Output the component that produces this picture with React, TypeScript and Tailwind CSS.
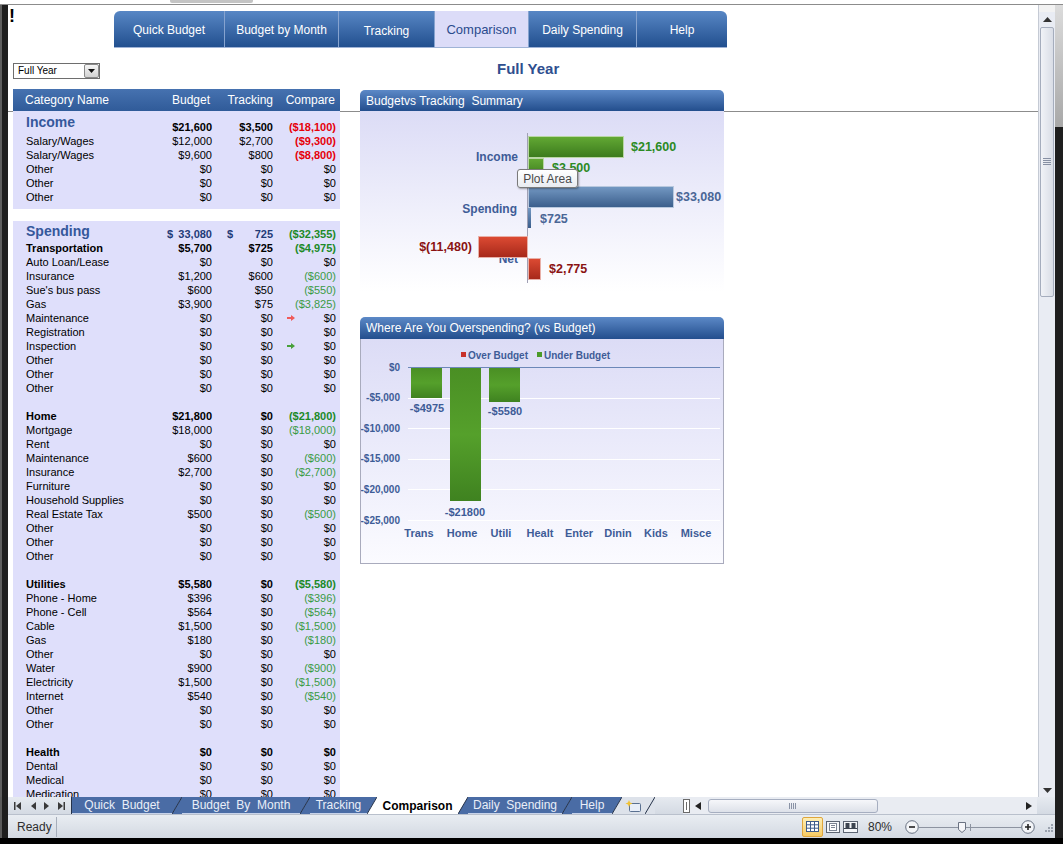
import React from 'react';

type Item = { l: string; b: string; t: string; c: string; bold?: boolean; arrow?: 'r' | 'g'; blank?: boolean };

const FONT = 'Liberation Sans, Arial, sans-serif';

const z = (l: string): Item => ({ l, b: '$0', t: '$0', c: '$0' });
const blank: Item = { l: '', b: '', t: '', c: '', blank: true };

const income: Item[] = [
  { l: 'Salary/Wages', b: '$12,000', t: '$2,700', c: '($9,300)' },
  { l: 'Salary/Wages', b: '$9,600', t: '$800', c: '($8,800)' },
  z('Other'),
  z('Other'),
  z('Other'),
];

const spending: Item[] = [
  { l: 'Transportation', b: '$5,700', t: '$725', c: '($4,975)', bold: true },
  z('Auto Loan/Lease'),
  { l: 'Insurance', b: '$1,200', t: '$600', c: '($600)' },
  { l: "Sue's bus pass", b: '$600', t: '$50', c: '($550)' },
  { l: 'Gas', b: '$3,900', t: '$75', c: '($3,825)' },
  { ...z('Maintenance'), arrow: 'r' },
  z('Registration'),
  { ...z('Inspection'), arrow: 'g' },
  z('Other'),
  z('Other'),
  z('Other'),
  blank,
  { l: 'Home', b: '$21,800', t: '$0', c: '($21,800)', bold: true },
  { l: 'Mortgage', b: '$18,000', t: '$0', c: '($18,000)' },
  z('Rent'),
  { l: 'Maintenance', b: '$600', t: '$0', c: '($600)' },
  { l: 'Insurance', b: '$2,700', t: '$0', c: '($2,700)' },
  z('Furniture'),
  z('Household Supplies'),
  { l: 'Real Estate Tax', b: '$500', t: '$0', c: '($500)' },
  z('Other'),
  z('Other'),
  z('Other'),
  blank,
  { l: 'Utilities', b: '$5,580', t: '$0', c: '($5,580)', bold: true },
  { l: 'Phone - Home', b: '$396', t: '$0', c: '($396)' },
  { l: 'Phone - Cell', b: '$564', t: '$0', c: '($564)' },
  { l: 'Cable', b: '$1,500', t: '$0', c: '($1,500)' },
  { l: 'Gas', b: '$180', t: '$0', c: '($180)' },
  z('Other'),
  { l: 'Water', b: '$900', t: '$0', c: '($900)' },
  { l: 'Electricity', b: '$1,500', t: '$0', c: '($1,500)' },
  { l: 'Internet', b: '$540', t: '$0', c: '($540)' },
  z('Other'),
  z('Other'),
  blank,
  { ...z('Health'), bold: true },
  z('Dental'),
  z('Medical'),
  z('Medication'),
];

function CellArrow({ color }: { color: string }) {
  return (
    <svg width="8" height="6" className="ml-[14px] shrink-0">
      <path d="M0 2h4V0l4 3-4 3V4H0z" fill={color} />
    </svg>
  );
}

function Line({ r, red }: { r: Item; red?: boolean }) {
  if (r.blank) return <div className="h-[14px]" />;
  const neg = r.c.startsWith('(');
  const cColor = red
    ? 'text-[#e6000a] font-bold'
    : neg
      ? r.bold
        ? 'text-[#1c8a28] font-bold'
        : 'text-[#3a9b45]'
      : '';
  return (
    <div className={`grid grid-cols-[139px_60px_61px_63px] h-[14px] leading-[14px] text-[11px] text-black ${r.bold ? 'font-bold' : ''}`}>
      <div className="pl-[13px] whitespace-nowrap">{r.l}</div>
      <div className="text-right">{r.b}</div>
      <div className="text-right">{r.t}</div>
      <div className={`flex items-center ${cColor}`}>
        {r.arrow === 'r' && <CellArrow color="#f05a5a" />}
        {r.arrow === 'g' && <CellArrow color="#47a03a" />}
        <span className="ml-auto">{r.c}</span>
      </div>
    </div>
  );
}

function BudgetTable() {
  return (
    <div className="w-[327px]">
      <div className="flex h-[16px] w-[87px] border border-[#6e6e6e] bg-white">
        <span className="flex-1 pl-[4px] text-[10px] leading-[14px] text-black">Full Year</span>
        <div className="flex h-[14px] w-[15px] items-center justify-center rounded-[2px] border border-[#8a8a8a] bg-linear-to-b from-[#f6f6f6] to-[#d2d2d2]">
          <svg width="7" height="4">
            <path d="M0 0h7L3.5 4z" fill="#111" />
          </svg>
        </div>
      </div>
      <div className="mt-[10px] grid h-[22px] grid-cols-[139px_60px_61px_63px] items-center bg-linear-to-b from-[#4672b0] to-[#305b99] text-[12px] text-white">
        <div className="pl-[12px]">Category Name</div>
        <div className="pr-[2px] text-right">Budget</div>
        <div className="text-right">Tracking</div>
        <div className="pr-[1px] text-right">Compare</div>
      </div>
      <div className="bg-[#dfdffb] pb-[5px]">
        <div className="grid h-[23px] grid-cols-[139px_60px_61px_63px] text-[11px] font-bold">
          <div className="pl-[13px] pt-[3px] text-[14px] leading-[16px] text-[#35589b]">Income</div>
          <div className="self-end text-right leading-[14px]">$21,600</div>
          <div className="self-end text-right leading-[14px]">$3,500</div>
          <div className="self-end text-right leading-[14px] text-[#e6000a]">($18,100)</div>
        </div>
        {income.map((r, i) => (
          <Line key={i} r={r} red={r.c.startsWith('(')} />
        ))}
      </div>
      <div className="h-[12px] bg-white" />
      <div className="bg-[#dfdffb] pb-[20px]">
        <div className="grid h-[20px] grid-cols-[139px_60px_61px_63px] text-[11px] font-bold">
          <div className="pl-[13px] pt-[2px] text-[14px] leading-[16px] text-[#35589b]">Spending</div>
          <div className="flex justify-between self-end pl-[15px] leading-[14px] text-[#1f3b78]">
            <span>$</span>
            <span>33,080</span>
          </div>
          <div className="flex justify-between self-end pl-[15px] leading-[14px] text-[#1f3b78]">
            <span>$</span>
            <span>725</span>
          </div>
          <div className="self-end text-right leading-[14px] text-[#1c8a28]">($32,355)</div>
        </div>
        {spending.map((r, i) => (
          <Line key={i} r={r} />
        ))}
      </div>
    </div>
  );
}

function ChartHeader({ title }: { title: string }) {
  return (
    <div className="flex h-[21px] items-center whitespace-pre rounded-t-[5px] bg-linear-to-b from-[#5c89c7] to-[#234e8d] pl-[6px] text-[12px] text-white">
      {title}
    </div>
  );
}

function SummaryChart() {
  return (
    <div className="relative h-[181px] bg-linear-to-b from-[#dcdcf6] to-white">
      <svg width="364" height="181" className="block">
        <defs>
          <linearGradient id="sg" x1="0" y1="0" x2="0" y2="1">
            <stop offset="0" stopColor="#63a934" />
            <stop offset="1" stopColor="#3b7a1d" />
          </linearGradient>
          <linearGradient id="sb" x1="0" y1="0" x2="0" y2="1">
            <stop offset="0" stopColor="#7499c3" />
            <stop offset="1" stopColor="#3a5d8b" />
          </linearGradient>
          <linearGradient id="sr" x1="0" y1="0" x2="0" y2="1">
            <stop offset="0" stopColor="#dd4b33" />
            <stop offset="1" stopColor="#a6281a" />
          </linearGradient>
        </defs>
        <g fontFamily={FONT} fontWeight="bold" fontSize="12" fill="#3e5c97">
          <text x="158" y="50" textAnchor="end">Income</text>
          <text x="157" y="102" textAnchor="end">Spending</text>
          <text x="158" y="152" textAnchor="end">Net</text>
        </g>
        <line x1="167.5" y1="22" x2="167.5" y2="172" stroke="#a0a0b4" />
        <rect x="168.5" y="25.5" width="95" height="21" fill="url(#sg)" stroke="#b9d6a4" />
        <rect x="168.5" y="47.5" width="15" height="19" fill="url(#sg)" stroke="#b9d6a4" />
        <rect x="168.5" y="75.5" width="145" height="21" fill="url(#sb)" stroke="#b8c8de" />
        <rect x="168" y="97" width="3" height="20" fill="url(#sb)" />
        <rect x="118.5" y="125.5" width="49" height="21" fill="url(#sr)" stroke="#e8b0a8" />
        <rect x="168.5" y="147.5" width="12" height="21" fill="url(#sr)" stroke="#e8b0a8" />
        <g fontFamily={FONT} fontWeight="bold" fontSize="12.5">
          <text x="271" y="40" fill="#2b8a24">$21,600</text>
          <text x="192" y="61" fill="#2b8a24">$3,500</text>
          <text x="316" y="90" fill="#4a6696">$33,080</text>
          <text x="180" y="112" fill="#4a6696">$725</text>
          <text x="112" y="140" textAnchor="end" fill="#8a1212">$(11,480)</text>
          <text x="189" y="162" fill="#8a1212">$2,775</text>
        </g>
      </svg>
      <div className="absolute left-[157px] top-[58px] flex h-[19px] w-[61px] items-center justify-center rounded-[3px] border border-[#7a7a7a] bg-linear-to-b from-white to-[#e9ecf1] text-[12px] text-[#4a4a4a] shadow-[1px_1px_2px_rgba(0,0,0,0.35)]">
        Plot Area
      </div>
    </div>
  );
}

function OverChart() {
  const ys = [28, 58.6, 89.2, 119.8, 150.4, 181];
  const ylabels = ['$0', '-$5,000', '-$10,000', '-$15,000', '-$20,000', '-$25,000'];
  const cats: [string, number][] = [
    ['Trans', 58],
    ['Home', 101],
    ['Utili', 140],
    ['Healt', 179],
    ['Enter', 218],
    ['Dinin', 257],
    ['Kids', 295],
    ['Misce', 335],
  ];
  return (
    <div className="h-[225px] border-x border-b border-[#a9abbd] bg-linear-to-b from-[#dcdcf6] to-[#fbfbff]">
      <svg width="362" height="224" className="block">
        <defs>
          <linearGradient id="og" x1="0" y1="0" x2="0" y2="1">
            <stop offset="0" stopColor="#4a8f24" />
            <stop offset="0.5" stopColor="#55a02b" />
            <stop offset="1" stopColor="#3f8220" />
          </linearGradient>
        </defs>
        <g fontFamily={FONT} fontWeight="bold" fontSize="10" fill="#3e5c97">
          <rect x="100" y="13" width="5" height="5" fill="#c8312a" />
          <text x="107" y="19.5">Over Budget</text>
          <rect x="176" y="13" width="5" height="5" fill="#4b9a28" />
          <text x="183" y="19.5">Under Budget</text>
          {ys.map((y, i) => (
            <React.Fragment key={i}>
              <line x1="47" x2="359" y1={Math.round(y) + 0.5} y2={Math.round(y) + 0.5} stroke={i === 0 ? '#6c88b8' : '#ffffff'} />
              <text x="39" y={y + 3.6} textAnchor="end">
                {ylabels[i]}
              </text>
            </React.Fragment>
          ))}
        </g>
        <rect x="50" y="29" width="31" height="30" fill="url(#og)" />
        <rect x="89" y="29" width="31" height="133" fill="url(#og)" />
        <rect x="128" y="29" width="31" height="34" fill="url(#og)" />
        <g fontFamily={FONT} fontWeight="bold" fontSize="11" fill="#3e5c97" textAnchor="middle">
          <text x="66" y="73">-$4975</text>
          <text x="104" y="177">-$21800</text>
          <text x="144" y="76">-$5580</text>
          {cats.map(([c, x]) => (
            <text key={c} x={x} y="198">
              {c}
            </text>
          ))}
        </g>
      </svg>
    </div>
  );
}

const navTabs = [
  { label: 'Quick Budget', cls: 'w-[110px] rounded-tl-[6px]' },
  { label: 'Budget by Month', cls: 'w-[114px] border-l border-[#86a3cf]' },
  { label: 'Tracking', cls: 'w-[96px] border-l border-[#86a3cf] pt-[3px]' },
  { label: 'Comparison', cls: 'w-[94px] border-l border-[#86a3cf]', active: true },
  { label: 'Daily Spending', cls: 'w-[108px] border-l border-[#86a3cf]' },
  { label: 'Help', cls: 'w-[91px] border-l border-[#86a3cf] rounded-tr-[6px]' },
];

function NavTabs() {
  return (
    <div className="mt-[2px] flex h-[37px] border-b border-[#9fb3d6]">
      {navTabs.map((t) => (
        <div
          key={t.label}
          className={`flex items-center justify-center pt-[1px] ${t.cls} ${
            t.active
              ? 'bg-[#dcdcf8] text-[13px] text-[#2a4b8d]'
              : 'bg-linear-to-b from-[#5887c5] to-[#22508f] text-[12px] text-white'
          }`}
        >
          {t.label}
        </div>
      ))}
    </div>
  );
}

function Slant({ l, r }: { l: string; r: string }) {
  return (
    <svg width="10" height="17" className="block shrink-0">
      <polygon points="0,0 10,0 0,17" fill={l} />
      <polygon points="10,0 10,17 0,17" fill={r} />
      <line x1="0" y1="17" x2="10" y2="0" stroke="#26334a" strokeWidth="1" />
    </svg>
  );
}

const BLUE = '#4a6ca5';
const BAR = '#dde2ea';

function SheetTab({ w, label }: { w: string; label: string }) {
  return (
    <div className={`flex items-center justify-center whitespace-pre border-b border-[#c7d3ea] bg-[#4a6ca5] text-[12px] leading-[14px] text-[#e9eef8] ${w}`}>
      {label}
    </div>
  );
}

function SheetTabs() {
  return (
    <div className="flex h-[17px]">
      <div className="w-[8px] border-l-[2px] border-[#5a5a5a] bg-[#1e1e1e]" />
      <div className="flex flex-1 bg-linear-to-b from-[#e6eaf0] to-[#d4dae3]">
        <div className="flex w-[62px] items-center pl-[6px]">
          <svg width="7" height="8" className="block">
            <rect x="0" y="0" width="1.5" height="8" fill="#3a3a3a" />
            <path d="M7 0v8L2 4z" fill="#3a3a3a" />
          </svg>
          <svg width="6" height="8" className="ml-[9px] block">
            <path d="M6 0v8L1 4z" fill="#3a3a3a" />
          </svg>
          <svg width="6" height="8" className="ml-[8px] block">
            <path d="M0 0v8l5-4z" fill="#3a3a3a" />
          </svg>
          <svg width="7" height="8" className="ml-[8px] block">
            <path d="M0 0v8l5-4z" fill="#3a3a3a" />
            <rect x="5.5" y="0" width="1.5" height="8" fill="#3a3a3a" />
          </svg>
        </div>
        <div className="flex w-[613px] items-stretch">
          <div className="ml-[1px] w-[1px] bg-[#26334a]" />
          <SheetTab w="w-[100px]" label="Quick  Budget" />
          <Slant l={BLUE} r={BLUE} />
          <SheetTab w="w-[118px]" label="Budget  By  Month" />
          <Slant l={BLUE} r={BLUE} />
          <SheetTab w="w-[57px]" label="Tracking" />
          <Slant l={BLUE} r="#ffffff" />
          <div className="flex w-[81px] items-center justify-center bg-white text-[12px] font-bold leading-[14px] text-black">Comparison</div>
          <Slant l="#ffffff" r={BLUE} />
          <SheetTab w="w-[94px]" label="Daily  Spending" />
          <Slant l={BLUE} r={BLUE} />
          <SheetTab w="w-[40px]" label="Help" />
          <Slant l={BLUE} r={BAR} />
          <div className="flex w-[23px] items-center justify-center bg-[#dde2ea]">
            <svg width="17" height="12" className="block">
              <rect x="4.5" y="3.5" width="11" height="8" rx="1" fill="#e8eef8" stroke="#5a7090" />
              <path d="M4 0l1 2.5 2.5 1-2.5 1-1 2.5-1-2.5L0.5 3.5 3 2.5z" fill="#f2c230" />
            </svg>
          </div>
          <Slant l={BAR} r={BAR} />
        </div>
        <div className="flex w-[354px] items-center bg-[#e9ecf2]">
          <div className="flex h-[14px] w-[7px] items-center justify-center border border-[#6a6a6a] bg-white">
            <div className="h-[8px] w-px bg-[#6a6a6a]" />
          </div>
          <svg width="6" height="8" className="ml-[5px] block">
            <path d="M6 0v8L0 4z" fill="#222" />
          </svg>
          <div className="ml-[7px] flex h-[14px] w-[170px] items-center justify-center rounded-[3px] border border-[#a6aec0] bg-linear-to-b from-[#f6f7fa] to-[#dde1e9]">
            <svg width="8" height="6" className="block">
              <path d="M0.5 0v6M2.5 0v6M4.5 0v6M6.5 0v6" stroke="#8a93a6" />
            </svg>
          </div>
          <div className="flex-1" />
          <svg width="6" height="8" className="mr-[5px] block">
            <path d="M0 0v8l6-4z" fill="#222" />
          </svg>
        </div>
        <div className="w-[18px]" />
      </div>
      <div className="w-[8px] bg-[#1e1e1e]" />
    </div>
  );
}

function StatusBar() {
  return (
    <div className="flex h-[24px]">
      <div className="w-[8px] border-l-[2px] border-[#5a5a5a] bg-[#1e1e1e]" />
      <div className="flex flex-1 items-center border-t border-[#b9c0cc] bg-linear-to-b from-[#e9edf2] to-[#d3d9e2] text-[12px] text-[#2e2e2e]">
        <span className="w-[48px] pl-[9px]">Ready</span>
        <div className="h-[20px] w-px bg-[#a6aeba]" />
        <div className="ml-auto flex items-center">
          <div className="flex h-[20px] w-[21px] items-center justify-center rounded-[2px] border border-[#dfa63c] bg-linear-to-b from-[#fdeeb4] to-[#f7cb62]">
            <svg width="13" height="11" className="block">
              <rect x="0.5" y="0.5" width="12" height="10" fill="#fff" stroke="#3e5a88" />
              <path d="M4.5 0.5v10M8.5 0.5v10M0.5 3.8h12M0.5 7.2h12" stroke="#3e5a88" />
            </svg>
          </div>
          <svg width="14" height="12" className="ml-[3px] block">
            <rect x="0.5" y="0.5" width="13" height="11" fill="#f4f6f9" stroke="#5c6472" />
            <rect x="3.5" y="2.5" width="7" height="7" fill="#fff" stroke="#7b8392" />
            <path d="M5 4.5h4M5 6.5h4" stroke="#7b8392" />
          </svg>
          <svg width="15" height="12" className="ml-[3px] block">
            <rect x="0.5" y="0.5" width="14" height="11" fill="#f4f6f9" stroke="#5c6472" />
            <rect x="2.5" y="2" width="4" height="5" fill="#3c4450" />
            <rect x="8.5" y="2" width="4" height="5" fill="#3c4450" />
            <path d="M1 7.5h13" stroke="#3c4450" />
          </svg>
          <span className="ml-[10px] w-[22px] text-[12px]">80%</span>
          <svg width="14" height="14" className="ml-[15px] block">
            <circle cx="7" cy="7" r="6.3" fill="#f3f5f8" stroke="#667080" />
            <path d="M4 7h6" stroke="#222" strokeWidth="1.6" />
          </svg>
          <svg width="102" height="14" className="block">
            <path d="M0 7.5h102" stroke="#8c93a0" />
            <path d="M51.5 4v7" stroke="#8c93a0" />
            <path d="M39.5 2.5h7v7l-3.5 3-3.5-3z" fill="#f5f6f9" stroke="#6a7282" />
          </svg>
          <svg width="14" height="14" className="block">
            <circle cx="7" cy="7" r="6.3" fill="#f3f5f8" stroke="#667080" />
            <path d="M4 7h6M7 4v6" stroke="#222" strokeWidth="1.6" />
          </svg>
          <svg width="10" height="10" className="ml-[8px] mr-[2px] block">
            <g fill="#9aa2ae">
              <rect x="8" y="2" width="2" height="2" />
              <rect x="5" y="5" width="2" height="2" />
              <rect x="8" y="5" width="2" height="2" />
              <rect x="2" y="8" width="2" height="2" />
              <rect x="5" y="8" width="2" height="2" />
              <rect x="8" y="8" width="2" height="2" />
            </g>
          </svg>
        </div>
      </div>
      <div className="w-[8px] bg-[#1e1e1e]" />
    </div>
  );
}

function VScroll() {
  return (
    <div className="flex w-[17px] flex-col border-l border-[#c5cad4] bg-[#e9ecf3]">
      <div className="h-[7px] bg-[#f2f2f2]" />
      <div className="flex h-[14px] items-center justify-center">
        <svg width="9" height="5" className="block">
          <path d="M0 5h9L4.5 0z" fill="#333" />
        </svg>
      </div>
      <div className="mx-[1px] mt-[1px] flex h-[270px] items-center justify-center rounded-[2px] border border-[#a5adbd] bg-linear-to-r from-[#f1f3f7] to-[#d9dde6]">
        <svg width="8" height="8" className="block">
          <path d="M0 0.5h8M0 2.5h8M0 4.5h8M0 6.5h8" stroke="#8790a3" />
        </svg>
      </div>
      <div className="flex-1" />
      <div className="flex h-[14px] items-center justify-center">
        <svg width="9" height="5" className="block">
          <path d="M0 0h9L4.5 5z" fill="#333" />
        </svg>
      </div>
    </div>
  );
}

export default function App() {
  return (
    <div className="flex h-[844px] w-[1063px] flex-col overflow-hidden bg-black font-['Liberation_Sans',Arial,sans-serif]">
      <div className="h-[5px] border-b border-[#8c8c8c] bg-white pl-[170px]">
        <div className="h-[3px] w-[83px] rounded-b-[2px] bg-[#c4c4c4]" />
      </div>
      <div className="flex h-[792px]">
        <div className="w-[8px] border-l-[2px] border-[#5e5e5e] bg-[#1e1e1e]" />
        <div className="relative flex-1 overflow-hidden bg-white">
          <div className="absolute left-0 right-0 top-[106px] h-px bg-[#8c8c8c]" />
          <div className="relative flex items-start pt-[4px]">
            <div className="w-[106px] pl-[1px] text-[18px] font-bold leading-[14px] text-black">!</div>
            <NavTabs />
          </div>
          <div className="relative flex">
            <div className="ml-[5px] mt-[15px]">
              <BudgetTable />
            </div>
            <div className="ml-[20px] w-[364px]">
              <div className="mt-[12px] pl-[137px] text-[15px] font-bold leading-[18px] text-[#2f4f8f]">Full Year</div>
              <div className="mt-[12px]">
                <ChartHeader title="Budgetvs Tracking  Summary" />
                <SummaryChart />
              </div>
              <div className="mt-[25px]">
                <div className="flex h-[22px] items-center rounded-t-[5px] bg-linear-to-b from-[#5c89c7] to-[#234e8d] pl-[6px] text-[12px] text-white">
                  Where Are You Overspending? (vs Budget)
                </div>
                <OverChart />
              </div>
            </div>
          </div>
        </div>
        <VScroll />
        <div className="flex w-[8px] flex-col bg-[#1e1e1e]">
          <div className="h-[122px] bg-linear-to-b from-[#dcdcdc] to-[#a8a8a8]" />
        </div>
      </div>
      <SheetTabs />
      <StatusBar />
      <div className="h-[6px] bg-black" />
    </div>
  );
}
